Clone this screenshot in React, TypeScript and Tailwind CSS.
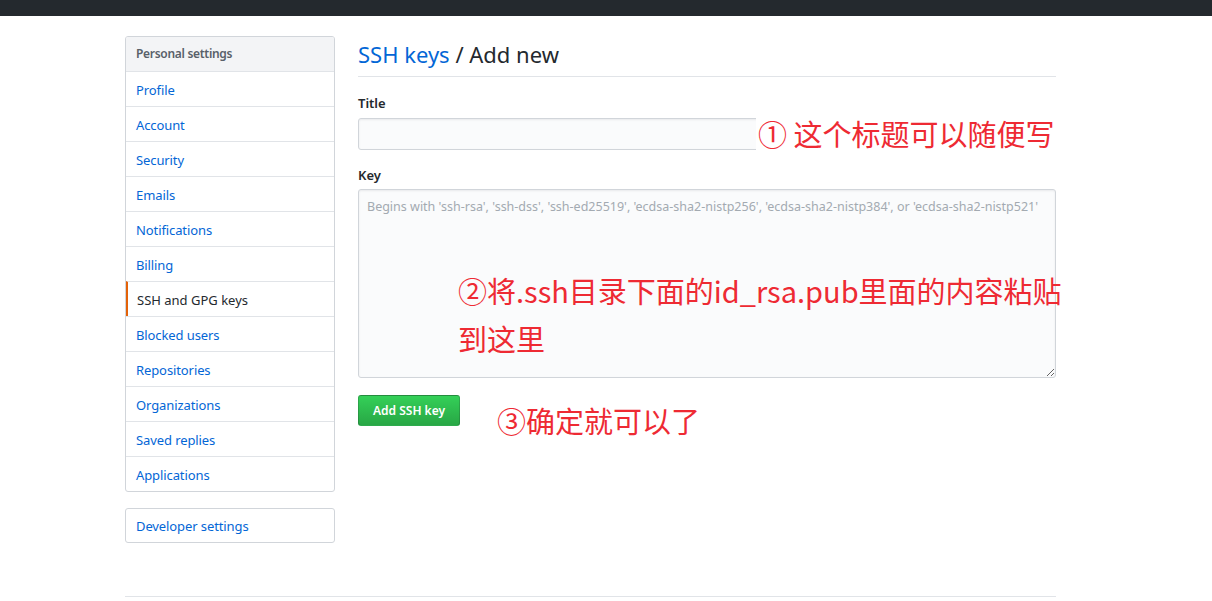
import React from "react";

const ui = { fontFamily: '"Noto Sans", "Open Sans", Arial, sans-serif' };
const cjk = { fontFamily: '"Noto Sans CJK SC", "Noto Sans", sans-serif' };

const items = [
  "Profile",
  "Account",
  "Security",
  "Emails",
  "Notifications",
  "Billing",
  "SSH and GPG keys",
  "Blocked users",
  "Repositories",
  "Organizations",
  "Saved replies",
  "Applications",
];

function Sidebar() {
  return (
    <div className="w-[210px] shrink-0">
      <nav className="rounded-[3px] border border-[#d1d5da] overflow-hidden">
        <div className="h-[34px] flex items-center pl-[10px] bg-[#f3f4f6] text-[12px] tracking-[-0.3px] font-semibold text-[#586069]">
          Personal settings
        </div>
        {items.map((label) =>
          label === "SSH and GPG keys" ? (
            <div
              key={label}
              className="h-[35px] flex items-center border-t border-[#e1e4e8] border-l-2 border-l-[#e36209] pl-[9px] pt-[3px] text-[13px] text-[#24292e]"
            >
              {label}
            </div>
          ) : (
            <a
              key={label}
              href="#"
              className="h-[35px] flex items-center border-t border-[#e1e4e8] pl-[10px] pt-[3px] text-[13px] tracking-[-0.1px] text-[#0366d6]"
            >
              {label}
            </a>
          )
        )}
      </nav>
      <div className="mt-4 h-[35px] rounded-[3px] border border-[#d1d5da] flex items-center pl-[10px] pt-[2px] text-[13px] tracking-[-0.1px] text-[#0366d6]">
        Developer settings
      </div>
    </div>
  );
}

export default function App() {
  return (
    <div className="min-h-[601px] bg-white text-[#24292e]" style={ui}>
      <div className="h-4 bg-[#24292e]" />
      <div className="ml-[125px] w-[931px] pt-5">
        <div className="flex gap-[23px]">
          <Sidebar />
          <main className="relative flex-1">
            <h2 className="h-[41px] border-b border-[#e1e4e8] text-[22px] leading-9 font-normal">
              <a href="#" className="text-[#0366d6]">SSH keys</a> / Add new
            </h2>
            <label className="block mt-4 h-5 leading-5 text-[13px] font-semibold">Title</label>
            <input className="block mt-[5px] h-[32px] w-[440px] rounded-[3px] border border-[#d1d5da] bg-[#fafbfc] shadow-[inset_0_1px_2px_rgba(27,31,35,0.075)]" />
            <label className="block mt-[15px] h-5 leading-5 text-[13px] font-semibold">Key</label>
            <textarea
              className="block mt-[4px] h-[189px] w-full rounded-[3px] border border-[#d1d5da] bg-[#fafbfc] pl-[8px] pr-[2px] py-[8px] text-[12.5px] placeholder:text-[#a3aab1] shadow-[inset_0_1px_2px_rgba(27,31,35,0.075)]"
              placeholder="Begins with 'ssh-rsa', 'ssh-dss', 'ssh-ed25519', 'ecdsa-sha2-nistp256', 'ecdsa-sha2-nistp384', or 'ecdsa-sha2-nistp521'"
            />
            <button className="mt-[17px] h-[31px] px-[14px] rounded-[3px] border border-[rgba(27,31,35,0.2)] bg-gradient-to-b from-[#34d058] to-[#28a745] text-white text-[12px] font-semibold">
              Add SSH key
            </button>

            {/* annotations pasted over the form */}
            <div
              className="absolute left-[398px] top-[77px] whitespace-nowrap bg-white pl-[2px] pr-2 text-[29px] leading-10 text-[#ee2a33]"
              style={cjk}
            >
              ① 这个标题可以随便写
            </div>
            <div
              className="absolute left-[100px] top-[230px] w-[640px] text-[29px] leading-[48px] text-[#ee2a33]"
              style={cjk}
            >
              ②将.ssh目录下面的id_rsa.pub里面的内容粘贴
              <br />
              到这里
            </div>
            <div
              className="absolute left-[139px] top-[364px] whitespace-nowrap text-[29px] leading-10 text-[#ee2a33]"
              style={cjk}
            >
              ③确定就可以了
            </div>
          </main>
        </div>
        <div className="mt-[53px] border-t border-[#e1e4e8]" />
      </div>
    </div>
  );
}
